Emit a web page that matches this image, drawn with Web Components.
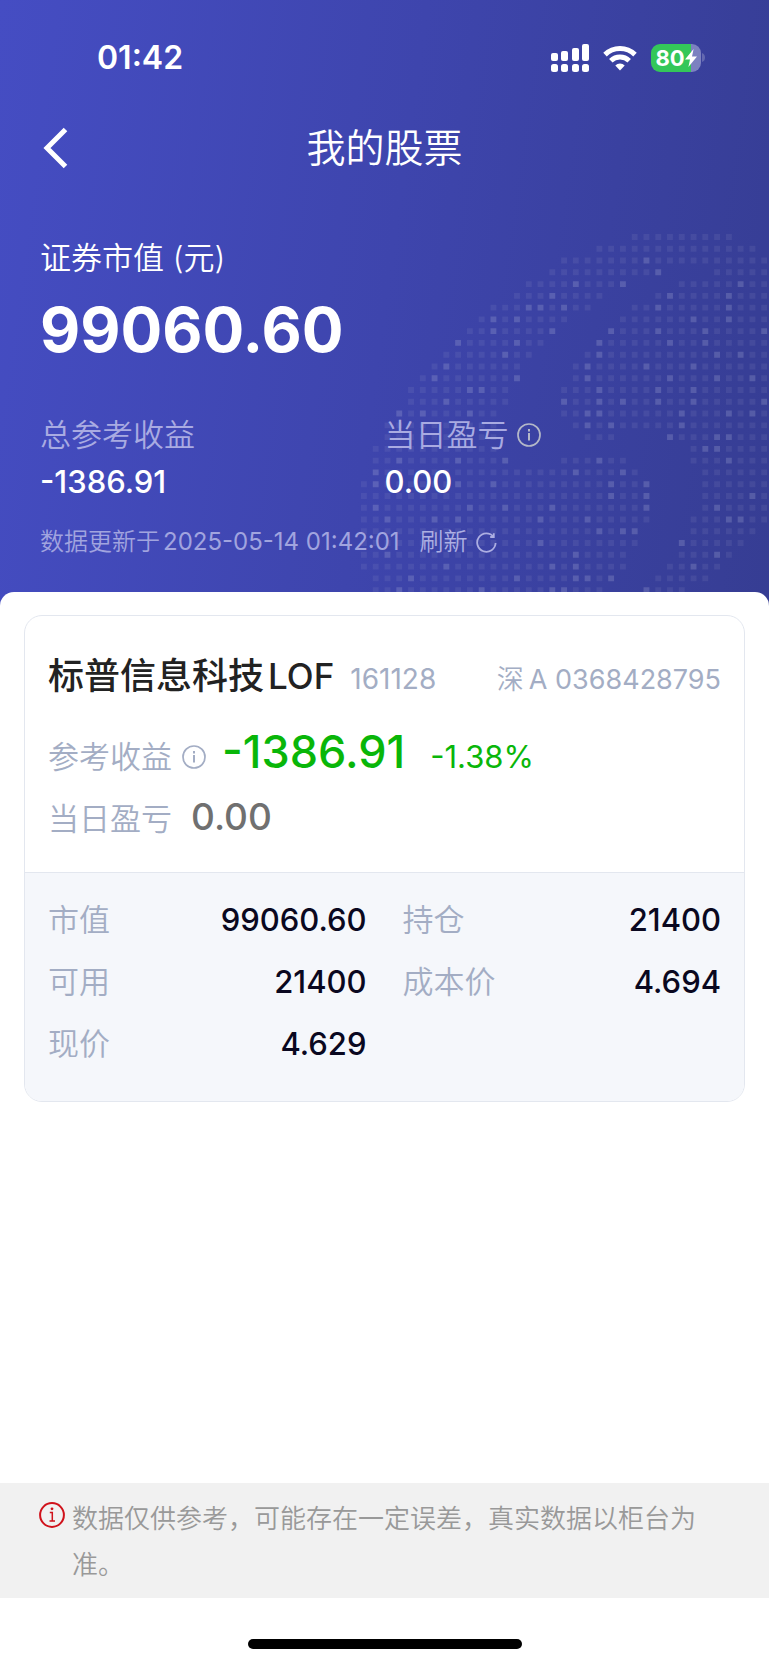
<!DOCTYPE html>
<html lang="zh-CN">
<head>
<meta charset="utf-8">
<meta name="viewport" content="width=device-width, initial-scale=1">
<title>我的股票</title>
<style>
  body { margin: 0; background: #fff; font-family: "Inter", "Noto Sans CJK SC", sans-serif; }
</style>
</head>
<body>
<stock-page></stock-page>

<script>
const define = (name, html, setup) => {
  const template = document.createElement('template');
  template.innerHTML = html;
  customElements.define(name, class extends HTMLElement {
    constructor() {
      super();
      this.attachShadow({ mode: 'open' }).append(template.content.cloneNode(true));
    }
    connectedCallback() {
      if (setup) setup(this.shadowRoot, this);
    }
  });
};

define('status-bar', `
  <style>
    :host { display: flex; align-items: center; justify-content: space-between; height: 115px; padding: 0 64px 0 97px; color: #fff; }
    time { font-size: 32px; line-height: 40px; font-weight: 600; }
    .icons { display: flex; align-items: center; gap: 14px; }
    svg { display: block; }
    .battery { display: flex; align-items: center; gap: 1px; }
    .cell { display: flex; align-items: center; justify-content: center; width: 50px; height: 28px; border-radius: 9px; background: linear-gradient(90deg, #34c759 80%, #7c81c0 80%); font-size: 22px; line-height: 28px; font-weight: 700; }
  </style>
  <time>01:42</time>
  <div class="icons">
    <svg width="38" height="28" viewBox="0 0 38 28" fill="#fff" aria-label="信号">
      <rect x="0" y="9" width="7" height="8" rx="2"/><rect x="10" y="7" width="7" height="10" rx="2"/>
      <rect x="21" y="4" width="7" height="13" rx="2"/><rect x="31" y="0" width="7" height="17" rx="2"/>
      <rect x="0" y="20" width="7" height="8" rx="2.5"/><rect x="10" y="20" width="7" height="8" rx="2.5"/>
      <rect x="21" y="20" width="7" height="8" rx="2.5"/><rect x="31" y="20" width="7" height="8" rx="2.5"/>
    </svg>
    <svg width="34" height="26" viewBox="0 0 34 26" fill="none" stroke="#fff" stroke-width="5" aria-label="无线网络">
      <path d="M2 9.6A21.5 21.5 0 0 1 32 9.6"/><path d="M7.8 15.8A13.3 13.3 0 0 1 26.2 15.8"/>
      <path d="M17 25.4l-4.7-4.9a6.7 6.7 0 0 1 9.4 0z" fill="#fff" stroke="none"/>
    </svg>
    <div class="battery">
      <div class="cell">80<svg width="12" height="18" viewBox="0 0 12 18" fill="#fff"><path d="M8.6 0L0 10.4h5L3.4 18 12 7.4H7z"/></svg></div>
      <svg width="3" height="9" viewBox="0 0 3 9"><path d="M0 0q3 1 3 4.500t-3 4.500z" fill="#6469b0"/></svg>
    </div>
  </div>
`);

define('nav-bar', `
  <style>
    :host { display: grid; grid-template-columns: 80px 1fr 80px; align-items: center; height: 66px; color: #fff; }
    button { display: flex; padding: 12px 12px 12px 42px; border: 0; background: none; color: inherit; }
    h1 { margin: 0; font-size: 39px; line-height: 56px; font-weight: 350; text-align: center; }
  </style>
  <button type="button" aria-label="返回">
    <svg width="26" height="42" viewBox="0 0 26 42" fill="none" stroke="currentColor" stroke-width="5"><path d="M23.500 2.500L5 21l18.500 18.500"/></svg>
  </button>
  <h1><slot></slot></h1>
`);

define('info-button', `
  <style>
    :host { display: inline-flex; }
    button { display: flex; padding: 0; border: 0; background: none; color: inherit; }
  </style>
  <button type="button" aria-label="说明">
    <svg width="24" height="24" viewBox="0 0 24 24" fill="none" stroke="currentColor" stroke-width="1.700">
      <circle cx="12" cy="12" r="11"/><path d="M12 10v7.600M12 6v2.400" stroke-width="2"/>
    </svg>
  </button>
`);

/* Column spans and highlighted columns of the dotted emblem, one entry per row. */
const DOTS = [
  ['23-31', ''], ['20-33', ''], ['17-34', '24'], ['16-25 30-34', '25'],
  ['14-22 27-34', '18 22 32'], ['13-20 25-34', '16 26 31'], ['11-19 23-34', '14 15 17 25 31'],
  ['10-17 22-34', '11 13 28 31'], ['9-16 21-34', '11 16 21 25 29 34'], ['8-15 20-34', '8 13 20 26 29'],
  ['7-14 19-34', '12 20 30 32'], ['6-13 18-34', '7 19 24 28'], ['5-13 18-34', '6 13 19 26 30 33'],
  ['4-12 17-34', '9 10 20 25 28'], ['4-12 17-34', '7 17 20 22 25 28 34'], ['3-11 17-34', '3 5 9 19 20 27 31 33'],
  ['2-11 18-34', '19 21 27'], ['2-11 19-21 26-34', '26 30 31'], ['1-11 28-34', '29 30'],
  ['1-12 17-22 28-34', '3 8 12 20 31'], ['1-23 29-34', '1 18 22'], ['0-24 29-34', '1 8 11 21 24'],
  ['0-24 29-34', '21 24 33'], ['0-24 29-34', '1 9 12 16 24 30'], ['0-24 28-34', '2 6 8 15 19 31 32'],
  ['0-23 28-33', '20 22 23'], ['0-23 27-32', '15 27'], ['0-22 27-31', '2 18 30'],
  ['0-22 26-30', '7 16 18 28'], ['1-21 25-29', '4 13 18 19 21'], ['1-20 24-27', '3 10 16 17 24'],
];

define('dot-emblem', `
  <style>:host { display: block; } svg { display: block; }</style>
  <svg width="412" height="365" viewBox="0 0 70 62" fill="#b9bcdc" aria-hidden="true">
    <path class="dim" opacity=".1"/><path class="lit" opacity=".24"/>
  </svg>
`, root => {
  let dim = '', lit = '';
  DOTS.forEach(([spans, marks], row) => {
    const marked = marks.split(' ');
    for (const span of spans.split(' ')) {
      const [from, to] = span.split('-').map(Number);
      for (let col = from; col <= to; col++) {
        const square = `M${col * 2} ${row * 2}h1v1h-1z`;
        if (marked.includes(String(col))) lit += square; else dim += square;
      }
    }
  });
  root.querySelector('.dim').setAttribute('d', dim);
  root.querySelector('.lit').setAttribute('d', lit);
});

define('asset-summary', `
  <style>
    :host { display: block; padding: 54px 40px 46px; color: #fff; }
    p, dl, dd { margin: 0; }
    .label { font-size: 31px; line-height: 46px; font-weight: 350; }
    .total { margin-top: 9px; font-size: 62px; line-height: 80px; font-weight: 700; }
    dl { display: grid; grid-template-columns: 1fr 1fr; margin-top: 42px; }
    dt { display: flex; align-items: center; gap: 8px; font-size: 31px; line-height: 46px; font-weight: 350; color: #a9abe2; }
    info-button { color: #b4b8c8; }
    dd { font-size: 31px; line-height: 48px; font-weight: 500; }
    .update { display: flex; align-items: center; gap: 20px; margin-top: 18px; font-size: 24px; line-height: 36px; font-weight: 350; color: #a1a4df; }
    .update time { margin-left: 3px; font-weight: 400; }
    button { display: flex; align-items: center; gap: 8px; padding: 0; border: 0; background: none; font: inherit; color: #adafe2; }
  </style>
  <p class="label">证券市值 (元)</p>
  <p class="total">99060.60</p>
  <dl>
    <div><dt>总参考收益</dt><dd>-1386.91</dd></div>
    <div><dt>当日盈亏<info-button></info-button></dt><dd>0.00</dd></div>
  </dl>
  <div class="update">
    <span>数据更新于<time>2025-05-14 01:42:01</time></span>
    <button type="button">刷新
      <svg width="21" height="21" viewBox="0 0 21 21" fill="none" stroke="currentColor" stroke-width="1.800"><path d="M19.600 11A9.200 9.200 0 1 1 17.600 4.800M14.200 5H17.800V1.300"/></svg>
    </button>
  </div>
`);

define('data-item', `
  <style>
    :host { display: flex; justify-content: space-between; align-items: center; line-height: 46px; }
    .name { font-size: 31px; font-weight: 350; color: #a3adc4; }
    .value { font-size: 31px; font-weight: 500; color: #0a0820; }
  </style>
  <span class="name"><slot name="name"></slot></span>
  <span class="value"><slot></slot></span>
`);

define('holding-card', `
  <style>
    :host { display: block; margin: 23px 24px; border: 1px solid #e3e7ef; border-radius: 18px; overflow: hidden; color: #a3adc4; }
    .top { padding: 34px 23px 24px; }
    .row { display: flex; align-items: baseline; }
    h2 { margin: 0; font-size: 36px; line-height: 52px; font-weight: 500; color: #222; }
    h2 span { margin-left: 4px; font-size: 35px; }
    .head { font-size: 27px; line-height: 52px; }
    .code { margin-left: 16px; font-size: 28px; }
    .account { margin-left: auto; font-weight: 350; }
    .account span { margin-left: 5px; font-weight: 400; }
    .gain { margin-top: 15px; line-height: 62px; }
    .day { line-height: 58px; }
    .label { font-size: 31px; font-weight: 350; }
    info-button { align-self: center; margin: 4px 16px 0 10px; }
    .profit { font-size: 45px; font-weight: 500; color: #09b609; }
    .rate { margin-left: 25px; font-size: 31px; color: #09b609; }
    .change { margin-left: 19px; font-size: 37px; font-weight: 500; color: #707070; }
    .grid { display: grid; grid-template-columns: 1fr 1fr; gap: 16px 36px; padding: 24px 23px 34px; border-top: 1px solid #e3e7ef; background: #f5f7fb; }
  </style>
  <div class="top">
    <div class="row head"><h2>标普信息科技<span>LOF</span></h2><span class="code">161128</span><span class="account">深<span>A 0368428795</span></span></div>
    <div class="row gain"><span class="label">参考收益</span><info-button></info-button><span class="profit">-1386.91</span><span class="rate">-1.38%</span></div>
    <div class="row day"><span class="label">当日盈亏</span><span class="change">0.00</span></div>
  </div>
  <div class="grid">
    <data-item><span slot="name">市值</span>99060.60</data-item>
    <data-item><span slot="name">持仓</span>21400</data-item>
    <data-item><span slot="name">可用</span>21400</data-item>
    <data-item><span slot="name">成本价</span>4.694</data-item>
    <data-item><span slot="name">现价</span>4.629</data-item>
  </div>
`);

define('risk-notice', `
  <style>
    :host { display: flex; align-items: flex-start; gap: 7px; padding: 13px 40px 10px 39px; background: #f1f1f1; color: #999; font-size: 26px; line-height: 46px; font-weight: 350; }
    svg { flex: none; margin-top: 6px; }
    p { margin: 0; }
  </style>
  <svg width="26" height="26" viewBox="0 0 26 26" fill="none" stroke="#d0121b" stroke-width="2" aria-hidden="true">
    <circle cx="13" cy="13" r="11.900"/><path d="M10.800 10.500H13.300V18.800M10.500 19H16" stroke-width="1.500"/><circle cx="13" cy="6.800" r="1.400" fill="#d0121b" stroke="none"/>
  </svg>
  <p><slot></slot></p>
`);

define('stock-page', `
  <style>
    :host { display: flex; flex-direction: column; min-height: 100vh; }
    header { position: relative; overflow: hidden; background: linear-gradient(98deg, #454dc3 0%, #3e45ad 50%, #363d93 100%); }
    dot-emblem { position: absolute; right: -4px; bottom: 7px; }
    asset-summary { position: relative; }
    main { position: relative; flex: 1; margin-top: -14px; border-radius: 14px 14px 0 0; background: #fff; overflow: hidden; }
    .home { display: flex; justify-content: center; padding: 41px 0 16px; }
    .home i { width: 274px; height: 10px; border-radius: 5px; background: #000; }
  </style>
  <header>
    <dot-emblem></dot-emblem>
    <status-bar></status-bar>
    <nav-bar>我的股票</nav-bar>
    <asset-summary></asset-summary>
  </header>
  <main><holding-card></holding-card></main>
  <risk-notice>数据仅供参考，可能存在一定误差，真实数据以柜台为准。</risk-notice>
  <div class="home"><i></i></div>
`);
</script>
</body>
</html>
